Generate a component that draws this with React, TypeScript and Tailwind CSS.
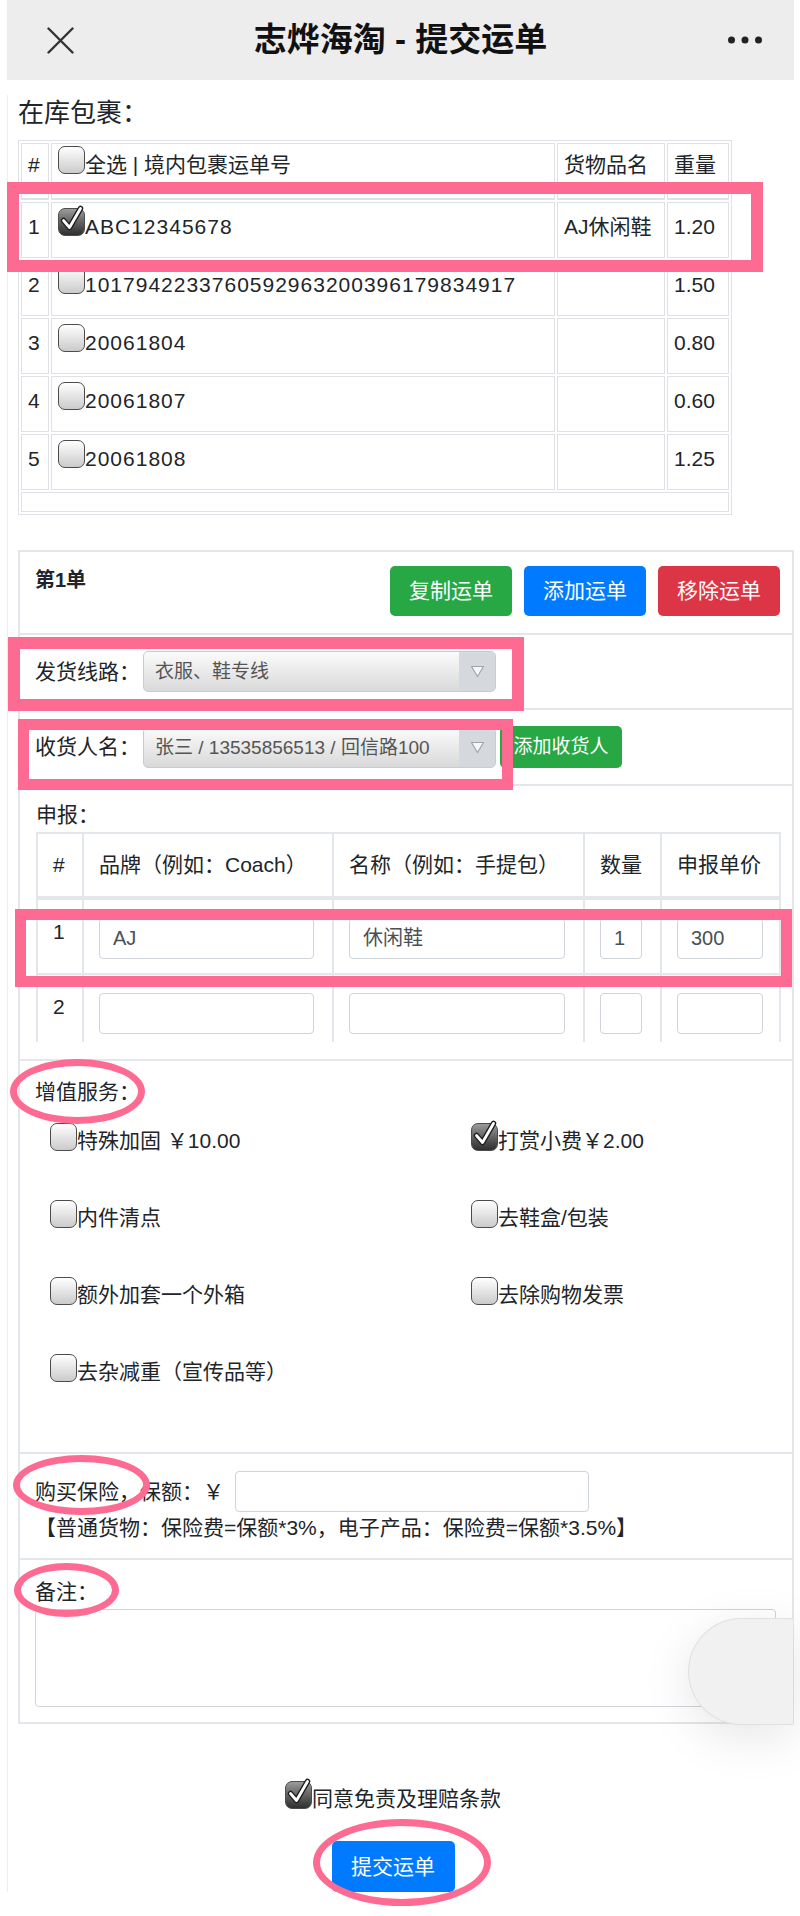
import React from "react";

type Pkg = {
  no: string;
  id: string;
  name: string;
  weight: string;
  checked?: boolean;
};

const packages: Pkg[] = [
  { no: "1", id: "ABC12345678", name: "AJ休闲鞋", weight: "1.20", checked: true },
  { no: "2", id: "1017942233760592963200396179834917", name: "", weight: "1.50" },
  { no: "3", id: "20061804", name: "", weight: "0.80" },
  { no: "4", id: "20061807", name: "", weight: "0.60" },
  { no: "5", id: "20061808", name: "", weight: "1.25" },
];

const services: { label: string; checked?: boolean }[] = [
  { label: "特殊加固 ￥10.00" },
  { label: "打赏小费￥2.00", checked: true },
  { label: "内件清点" },
  { label: "去鞋盒/包装" },
  { label: "额外加套一个外箱" },
  { label: "去除购物发票" },
  { label: "去杂减重（宣传品等）" },
];

const declared = [
  { no: "1", brand: "AJ", name: "休闲鞋", qty: "1", price: "300" },
  { no: "2", brand: "", name: "", qty: "", price: "" },
];

const CheckBox = ({ checked }: { checked?: boolean }) => (
  <span
    className={`relative inline-flex h-[28px] w-[27px] shrink-0 rounded-[7px] border-[1.5px] border-[#4c4c4c] ${
      checked
        ? "bg-linear-to-b from-[#9c9c9c] to-[#2f2f2f]"
        : "bg-linear-to-b from-white to-[#cbcbcb]"
    }`}
  >
    {checked && (
      <svg
        width="24"
        height="27"
        viewBox="0 0 24 27"
        className="absolute -top-[4px] left-[1px]"
      >
        <path
          d="M3.5 15.5 L9.5 22.5 L20.5 3.5"
          fill="none"
          stroke="#1e1e1e"
          strokeWidth="5.5"
          strokeLinecap="round"
          strokeLinejoin="round"
        />
        <path
          d="M3.5 15.5 L9.5 22.5 L20.5 3.5"
          fill="none"
          stroke="#fff"
          strokeWidth="2.8"
          strokeLinecap="round"
          strokeLinejoin="round"
        />
      </svg>
    )}
  </span>
);

const SelectBox = ({ value }: { value: string }) => (
  <div className="ml-[3px] flex h-[41px] w-[353px] overflow-hidden rounded-[5px] border border-[#c8cdd3] bg-linear-to-b from-[#fbfbfb] to-[#d9d9d9]">
    <div className="flex-1 truncate pl-[11px] text-[19px] leading-[39px] text-[#555]">
      {value}
    </div>
    <div className="flex w-[36px] items-center justify-center bg-[#d5d9de]">
      <svg width="15" height="13" viewBox="0 0 15 13">
        <polygon
          points="1.5,1.5 13.5,1.5 7.5,11.5"
          fill="#f6f7f8"
          stroke="#9fa5ab"
          strokeWidth="1.2"
          strokeLinejoin="round"
        />
      </svg>
    </div>
  </div>
);

const cellBorder = "border border-[#dee2e6]";
const th2 =
  "border-2 border-b-[4px] border-[#e3e6ea] px-[15px] text-left font-normal whitespace-nowrap";
const td2 = "border-2 border-[#e3e6ea] px-[15px] pb-[14px] pt-[18px] align-top";
const field =
  "h-[41px] rounded-[4px] border border-[#ced4da] pl-[13px] text-[20px] leading-[39px] text-[#495057]";

export default function App() {
  return (
    <div className="relative h-[1916px] w-[800px] overflow-hidden bg-white font-['Liberation_Sans','Noto_Sans_CJK_SC',sans-serif] text-[#212529]">
      <div className="ml-[7px] w-[787px]">
        {/* top bar */}
        <div className="flex h-[80px] items-center bg-[#ededed]">
          <div className="flex w-[80px] pl-[40px]">
            <svg width="27" height="27" viewBox="0 0 27 27">
              <path
                d="M1.5 1.5 L25.5 25.5 M25.5 1.5 L1.5 25.5"
                stroke="#333"
                strokeWidth="2.4"
                strokeLinecap="round"
              />
            </svg>
          </div>
          <div className="flex-1 text-center text-[33px] font-semibold text-[#111]">
            志烨海淘 - 提交运单
          </div>
          <div className="flex w-[80px] justify-end pr-[32px]">
            <svg width="34" height="8" viewBox="0 0 34 8">
              <circle cx="3.5" cy="4" r="3.5" fill="#222" />
              <circle cx="17" cy="4" r="3.5" fill="#222" />
              <circle cx="30.5" cy="4" r="3.5" fill="#222" />
            </svg>
          </div>
        </div>

        <div className="border-l border-[#eeeeee]">
          <p className="ml-[10px] mt-[15px] text-[26px] leading-[36px]">在库包裹：</p>

          <table className="ml-[10px] mt-[9px] w-[714px] table-fixed border-separate border-spacing-[2px] border border-[#dee2e6] text-[21px]">
            <thead>
              <tr>
                <th className={`h-[57px] w-[28px] border-b-2 px-[6px] pt-[8px] text-left align-top font-normal leading-[26px] ${cellBorder}`}>
                  #
                </th>
                <th className={`w-[504px] border-b-2 px-[6px] pt-[8px] text-left align-top font-normal leading-[26px] ${cellBorder}`}>
                  <div className="-mt-[6px] flex items-start">
                    <CheckBox />
                    <span className="mt-[6px]">全选 | 境内包裹运单号</span>
                  </div>
                </th>
                <th className={`w-[108px] border-b-2 px-[6px] pt-[8px] text-left align-top font-normal leading-[26px] ${cellBorder}`}>
                  货物品名
                </th>
                <th className={`w-[62px] border-b-2 px-[6px] pt-[8px] text-left align-top font-normal leading-[26px] ${cellBorder}`}>
                  重量
                </th>
              </tr>
            </thead>
            <tbody>
              {packages.map((p) => (
                <tr key={p.no}>
                  <td className={`h-[56px] px-[6px] pt-[11px] align-top leading-[26px] ${cellBorder}`}>
                    {p.no}
                  </td>
                  <td className={`px-[6px] pt-[11px] align-top leading-[26px] ${cellBorder}`}>
                    <div className="-mt-[6px] flex items-start">
                      <CheckBox checked={p.checked} />
                      <span className="mt-[6px] whitespace-nowrap tracking-[1px]">{p.id}</span>
                    </div>
                  </td>
                  <td className={`px-[6px] pt-[11px] align-top leading-[26px] ${cellBorder}`}>
                    {p.name}
                  </td>
                  <td className={`px-[6px] pt-[11px] align-top leading-[26px] ${cellBorder}`}>
                    {p.weight}
                  </td>
                </tr>
              ))}
              <tr>
                <td colSpan={4} className={`h-[20px] ${cellBorder}`} />
              </tr>
            </tbody>
          </table>

          {/* order box */}
          <div className="ml-[10px] mt-[35px] border-x-2 border-b-2 border-[#e3e6ea] text-[21px]">
            <div className="flex h-[83px] items-start justify-between border-t-2 border-[#e3e6ea] pl-[15px] pr-[12px] pt-[14px]">
              <span className="text-[20px] font-bold leading-[28px]">第1单</span>
              <div className="flex gap-[12px]">
                <button className="h-[50px] w-[122px] rounded-[5px] bg-[#28a745] text-white">
                  复制运单
                </button>
                <button className="h-[50px] w-[122px] rounded-[5px] bg-[#007bff] text-white">
                  添加运单
                </button>
                <button className="h-[50px] w-[122px] rounded-[5px] bg-[#dc3545] text-white">
                  移除运单
                </button>
              </div>
            </div>

            <div className="flex h-[75px] items-center border-t-2 border-[#e3e6ea] pl-[15px]">
              <span>发货线路：</span>
              <SelectBox value="衣服、鞋专线" />
            </div>

            <div className="flex h-[76px] items-center border-t-2 border-[#e3e6ea] pl-[15px]">
              <span>收货人名：</span>
              <SelectBox value="张三 / 13535856513 / 回信路100" />
              <button className="ml-[4px] h-[42px] w-[122px] rounded-[5px] bg-[#28a745] text-[19px] text-white">
                添加收货人
              </button>
            </div>

            <div className="h-[258px] overflow-hidden border-t-2 border-[#e3e6ea] pl-[16px] pt-[16px]">
              <p className="leading-[26px]">申报：</p>
              <table className="mt-[4px] w-[743px] table-fixed border-collapse text-[21px]">
                <thead>
                  <tr className="h-[65px]">
                    <th className={`w-[46px] ${th2}`}>#</th>
                    <th className={`w-[250px] ${th2}`}>品牌（例如：Coach）</th>
                    <th className={`w-[251px] ${th2}`}>名称（例如：手提包）</th>
                    <th className={`w-[77px] ${th2}`}>数量</th>
                    <th className={`w-[119px] ${th2}`}>申报单价</th>
                  </tr>
                </thead>
                <tbody>
                  {declared.map((d) => (
                    <tr key={d.no}>
                      <td className={`${td2} leading-[28px]`}>{d.no}</td>
                      <td className={td2}>
                        <div className={`w-[215px] ${field}`}>{d.brand}</div>
                      </td>
                      <td className={td2}>
                        <div className={`w-[216px] ${field}`}>{d.name}</div>
                      </td>
                      <td className={td2}>
                        <div className={`w-[42px] ${field}`}>{d.qty}</div>
                      </td>
                      <td className={td2}>
                        <div className={`w-[86px] ${field}`}>{d.price}</div>
                      </td>
                    </tr>
                  ))}
                </tbody>
              </table>
            </div>

            <div className="h-[17px]" />

            <div className="border-t-2 border-[#e3e6ea] pb-[67px] pl-[15px] pt-[18px]">
              <p className="leading-[26px]">增值服务：</p>
              <div className="ml-[15px] mt-[18px] grid grid-cols-[421px_1fr] gap-y-[46px]">
                {services.map((s) => (
                  <div key={s.label} className="flex items-start">
                    <CheckBox checked={s.checked} />
                    <span className="mt-[5px] whitespace-nowrap leading-[26px]">{s.label}</span>
                  </div>
                ))}
              </div>
            </div>

            <div className="border-t-2 border-[#e3e6ea] pb-[17px] pl-[15px] pt-[17px]">
              <div className="flex h-[41px] items-center">
                <span>购买保险，保额：￥</span>
                <div className="ml-[11px] h-[41px] w-[354px] rounded-[4px] border border-[#ced4da]" />
              </div>
              <p className="mt-[3px] leading-[26px]">
                【普通货物：保险费=保额*3%，电子产品：保险费=保额*3.5%】
              </p>
            </div>

            <div className="border-t-2 border-[#e3e6ea] pb-[15px] pl-[15px] pt-[19px]">
              <p className="leading-[26px]">备注：</p>
              <div className="mt-[4px] h-[98px] w-[741px] rounded-[4px] border border-[#ced4da]" />
            </div>
          </div>

          <div className="flex flex-col items-center pr-[16px] text-[21px]">
            <div className="mt-[57px] flex items-start">
              <CheckBox checked />
              <span className="mt-[5px] leading-[26px]">同意免责及理赔条款</span>
            </div>
            <button className="mt-[29px] h-[51px] w-[123px] rounded-[5px] bg-[#007bff] text-white">
              提交运单
            </button>
          </div>
        </div>
      </div>

      {/* floating pill */}
      <div className="absolute left-[688px] top-[1618px] h-[107px] w-[105px] rounded-l-full border border-r-0 border-[#e0e0e0] bg-[#f1f1f1] shadow-[0_12px_50px_rgba(0,0,0,0.10)]" />

      {/* annotations */}
      <div className="absolute left-[7px] top-[182px] h-[90px] w-[756px] border-[12px] border-[#fd6a92]" />
      <div className="absolute left-[8px] top-[637px] h-[74px] w-[516px] border-[12px] border-[#fd6a92]" />
      <div className="absolute left-[18px] top-[719px] h-[71px] w-[495px] border-[11px] border-[#fd6a92]" />
      <div className="absolute left-[15px] top-[909px] h-[78px] w-[777px] border-[11px] border-[#fd6a92]" />
      <div className="absolute left-[10px] top-[1059px] h-[65px] w-[135px] rounded-[50%] border-[7px] border-[#fd6a92]" />
      <div className="absolute left-[13px] top-[1455px] h-[60px] w-[137px] rounded-[50%] border-[7px] border-[#fd6a92]" />
      <div className="absolute left-[14px] top-[1563px] h-[54px] w-[105px] rounded-[50%] border-[7px] border-[#fd6a92]" />
      <div className="absolute left-[313px] top-[1819px] h-[87px] w-[178px] rounded-[50%] border-[7px] border-[#fd6a92]" />
    </div>
  );
}
